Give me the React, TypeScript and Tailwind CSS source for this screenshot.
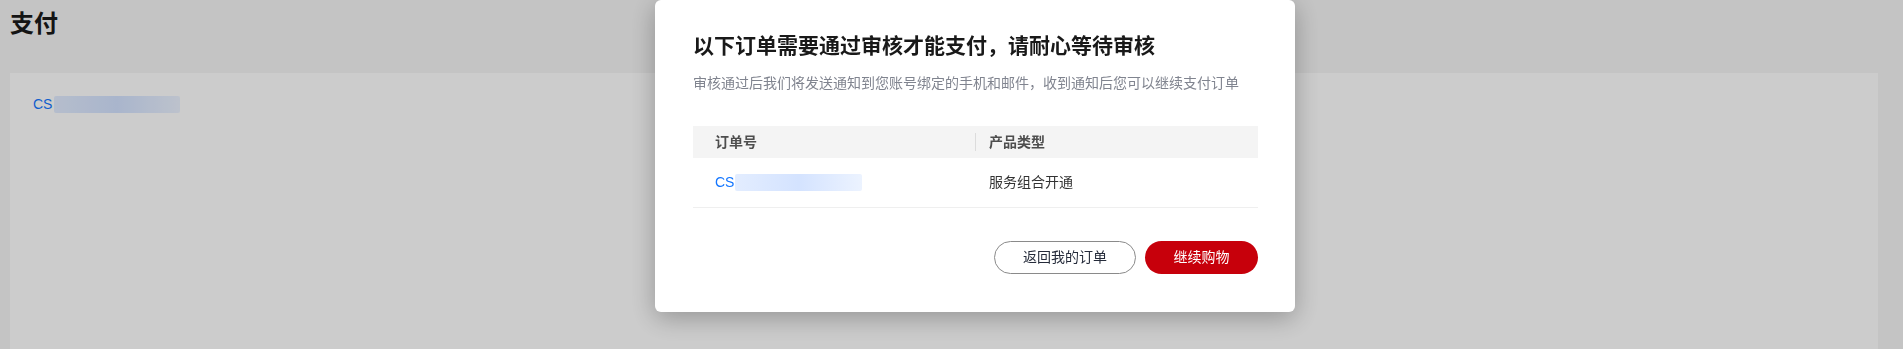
const font = { fontFamily: '"Liberation Sans", "Noto Sans CJK SC", sans-serif' };

function Redacted({ className }: { className: string }) {
  return (
    <span
      className={`inline-block rounded-[2px] bg-gradient-to-r from-[#e3edff] via-[#d4e3ff] to-[#ecf3ff] blur-[0.5px] ${className}`}
    />
  );
}

function ReviewModal() {
  return (
    <div className="absolute left-[655px] top-0 w-[640px] rounded-[6px] bg-white px-[38px] pb-[38px] pt-[31px] shadow-[0_6px_26px_rgba(0,0,0,0.28)]">
      <h2 className="text-[21px] font-bold leading-[30px] text-[#191919]">
        以下订单需要通过审核才能支付，请耐心等待审核
      </h2>
      <p className="mt-[12px] text-[14px] leading-[20px] text-[#80848f]">
        审核通过后我们将发送通知到您账号绑定的手机和邮件，收到通知后您可以继续支付订单
      </p>

      <div className="mt-[33px] w-[565px] text-[14px]">
        <div className="flex h-[32px] items-center bg-[#f4f4f4] text-[#4e4e4e]">
          <div className="w-[282px] pl-[22px] font-semibold">订单号</div>
          <div className="flex items-center font-semibold">
            <span className="h-[18px] w-px bg-[#dcdcdc]" />
            <span className="pl-[13px]">产品类型</span>
          </div>
        </div>
        <div className="flex h-[50px] items-center border-b border-[#efefef]">
          <div className="flex w-[282px] items-center pl-[22px]">
            <span className="text-[#1476ff]">CS</span>
            <Redacted className="ml-[1px] h-[17px] w-[127px]" />
          </div>
          <div className="pl-[14px] text-[#333333]">服务组合开通</div>
        </div>
      </div>

      <div className="mt-[33px] flex justify-end gap-[9px]">
        <button
          type="button"
          className="h-[33px] w-[142px] rounded-full border border-[#8a8a8a] bg-white text-[14px] text-[#252b3a]"
        >
          返回我的订单
        </button>
        <button
          type="button"
          className="mr-[-1px] h-[33px] w-[113px] rounded-full bg-[#c7000b] text-[14px] text-white"
        >
          继续购物
        </button>
      </div>
    </div>
  );
}

export default function App() {
  return (
    <div className="relative h-screen overflow-hidden bg-[#f5f5f5]" style={font}>
      <main className="flex h-full flex-col pl-[10px] pr-[25px] pt-[8px]">
        <h1 className="text-[24px] font-bold leading-[32px] text-[#191919]">支付</h1>
        <div className="mt-[33px] flex-1 bg-white pl-[23px] pt-[21px]">
          <div className="flex items-center text-[14px] leading-[20px]">
            <span className="text-[#1476ff]">CS</span>
            <Redacted className="ml-[2px] h-[17px] w-[126px]" />
          </div>
        </div>
      </main>

      <div className="fixed inset-0 bg-black/20">
        <ReviewModal />
      </div>
    </div>
  );
}
